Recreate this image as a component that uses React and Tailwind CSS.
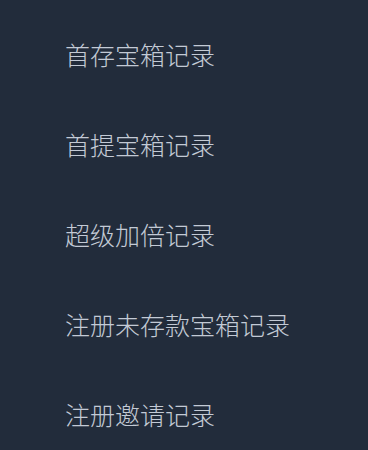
const items = [
  "首存宝箱记录",
  "首提宝箱记录",
  "超级加倍记录",
  "注册未存款宝箱记录",
  "注册邀请记录",
];

export default function App() {
  return (
    <div
      className="w-[368px] h-[450px] overflow-hidden bg-[#222c3b] pt-[9px]"
      style={{ fontFamily: '"Noto Sans CJK SC", "Noto Sans", sans-serif' }}
    >
      {items.map((label) => (
        <div key={label} className="h-[90px] flex items-center pl-[65px]">
          <span className="text-[25px] leading-none font-light text-[#c3cad5]">{label}</span>
        </div>
      ))}
    </div>
  );
}
